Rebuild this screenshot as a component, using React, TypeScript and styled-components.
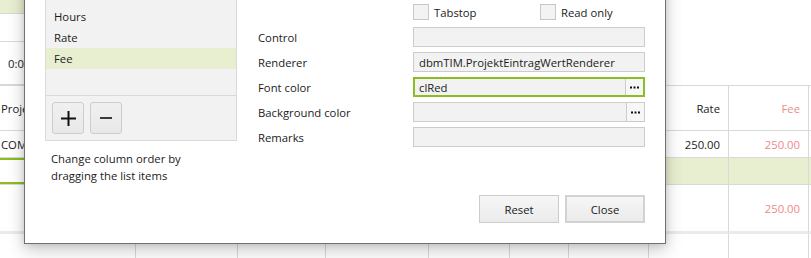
import styled, { createGlobalStyle } from "styled-components";

const GlobalStyle = createGlobalStyle`
  html, body {
    margin: 0;
    padding: 0;
    background: #ffffff;
  }
`;

const GRID_LINE = "#d9d9d9";
const SELECT_GREEN = "#e8efd1";
const ACCENT = "#8cbd22";
const FEE_PINK = "#ef8a8a";

const columns = [136, 102, 88, 103, 81, 59, 80, 80, 80, 2];

const listItems = ["Hours", "Rate", "Fee"];

export default function App() {
  return (
    <Page>
      <GlobalStyle />

      <Backdrop>
        <TopPanel>
          <TopRow $height={14} $selected />
          <TopRow $height={28} />
          <TopRow $height={43}>0:00</TopRow>
        </TopPanel>

        <Table>
          <Cell $height={45} $align="left">Projekt</Cell>
          {columns.slice(1, 7).map((_, i) => (
            <Cell key={`h${i}`} $height={45} />
          ))}
          <Cell $height={45}>Rate</Cell>
          <Cell $height={45} $pink>
            Fee
          </Cell>
          <Cell $height={45} $last />

          <Cell $height={27} $align="left">COMPANY</Cell>
          {columns.slice(1, 7).map((_, i) => (
            <Cell key={`a${i}`} $height={27} />
          ))}
          <Cell $height={27}>250.00</Cell>
          <Cell $height={27} $pink>
            250.00
          </Cell>
          <Cell $height={27} $last />

          <Cell $height={27} $editing />
          {columns.slice(1, 9).map((_, i) => (
            <Cell key={`b${i}`} $height={27} $selected />
          ))}
          <Cell $height={27} $selected $last />

          {columns.slice(0, 8).map((_, i) => (
            <Cell key={`c${i}`} $height={49} $band />
          ))}
          <Cell $height={49} $band $pink>
            250.00
          </Cell>
          <Cell $height={49} $band $last />

          {columns.map((_, i) => (
            <Cell key={`d${i}`} $height={30} $last={i === columns.length - 1} />
          ))}
        </Table>
      </Backdrop>

      <Dialog>
        <DialogBody>
          <ListColumn>
            <ListBox>
              <ListItems>
                {listItems.map((item) => (
                  <ListItem key={item} $selected={item === "Fee"}>
                    {item}
                  </ListItem>
                ))}
              </ListItems>
              <ListToolbar>
                <ToolButton aria-label="Add">
                  <svg width="15" height="15" viewBox="0 0 15 15">
                    <path d="M7.5 0v15M0 7.5h15" stroke="#111" strokeWidth="2" />
                  </svg>
                </ToolButton>
                <ToolButton aria-label="Remove">
                  <svg width="12" height="2" viewBox="0 0 12 2">
                    <path d="M0 1h12" stroke="#3a3a3a" strokeWidth="2" />
                  </svg>
                </ToolButton>
              </ListToolbar>
            </ListBox>
            <HelpText>
              Change column order by
              <br />
              dragging the list items
            </HelpText>
          </ListColumn>

          <Form>
            <CheckRow>
              <CheckItem $width={127}>
                <CheckBox />
                Tabstop
              </CheckItem>
              <CheckItem>
                <CheckBox />
                Read only
              </CheckItem>
            </CheckRow>

            <FieldRow>
              <FieldLabel>Control</FieldLabel>
              <Field />
            </FieldRow>
            <FieldRow>
              <FieldLabel>Renderer</FieldLabel>
              <Field>dbmTIM.ProjektEintragWertRenderer</Field>
            </FieldRow>
            <FieldRow>
              <FieldLabel>Font color</FieldLabel>
              <Field $focused>
                <FieldText>clRed</FieldText>
                <EllipsisButton>
                  <Dots />
                </EllipsisButton>
              </Field>
            </FieldRow>
            <FieldRow>
              <FieldLabel>Background color</FieldLabel>
              <Field>
                <FieldText />
                <EllipsisButton>
                  <Dots />
                </EllipsisButton>
              </Field>
            </FieldRow>
            <FieldRow>
              <FieldLabel>Remarks</FieldLabel>
              <Field />
            </FieldRow>
          </Form>
        </DialogBody>

        <DialogFooter>
          <DialogButton>Reset</DialogButton>
          <DialogButton $default>Close</DialogButton>
        </DialogFooter>
      </Dialog>
    </Page>
  );
}

function Dots() {
  return (
    <svg width="9" height="3" viewBox="0 0 9 3">
      <rect x="0" y="0.5" width="2" height="2" fill="#111" />
      <rect x="3.5" y="0.5" width="2" height="2" fill="#111" />
      <rect x="7" y="0.5" width="2" height="2" fill="#111" />
    </svg>
  );
}

const Page = styled.div`
  position: relative;
  width: 811px;
  height: 258px;
  overflow: hidden;
  background: #ffffff;
  font-family: "Segoe UI", "Open Sans", "Noto Sans", sans-serif;
  font-size: 11.3px;
  color: #1b1b1b;
`;

const Backdrop = styled.div`
  display: flex;
  flex-direction: column;
`;

const TopPanel = styled.div`
  width: 240px;
  display: flex;
  flex-direction: column;
`;

const TopRow = styled.div<{ $height: number; $selected?: boolean }>`
  box-sizing: border-box;
  height: ${(p) => p.$height}px;
  display: flex;
  align-items: center;
  padding-left: 8px;
  background: ${(p) => (p.$selected ? SELECT_GREEN : "transparent")};
  border-bottom: 1px solid ${GRID_LINE};
`;

const Table = styled.div`
  display: grid;
  grid-template-columns: ${columns.map((c) => `${c}px`).join(" ")};
  border-top: 1px solid ${GRID_LINE};
`;

const Cell = styled.div<{
  $height: number;
  $align?: "left" | "right";
  $pink?: boolean;
  $selected?: boolean;
  $editing?: boolean;
  $band?: boolean;
  $last?: boolean;
}>`
  box-sizing: border-box;
  height: ${(p) => p.$height}px;
  display: flex;
  align-items: center;
  justify-content: ${(p) => (p.$align === "left" ? "flex-start" : "flex-end")};
  padding: 0 ${(p) => (p.$align === "left" ? "0 0 1px" : "8px 0 0")};
  white-space: nowrap;
  overflow: hidden;
  color: ${(p) => (p.$pink ? FEE_PINK : "#1b1b1b")};
  background: ${(p) => (p.$selected ? SELECT_GREEN : "#ffffff")};
  border-right: ${(p) => (p.$last ? "none" : `1px solid ${GRID_LINE}`)};
  border-bottom: ${(p) => (p.$band ? "3px solid #ebebeb" : `1px solid ${GRID_LINE}`)};
  box-shadow: ${(p) =>
    p.$editing ? `inset 0 2px 0 ${ACCENT}, inset 0 -2px 0 ${ACCENT}` : "none"};
`;

const Dialog = styled.div`
  position: absolute;
  left: 24px;
  top: -40px;
  width: 642px;
  height: 284px;
  box-sizing: border-box;
  display: flex;
  flex-direction: column;
  padding: 20px;
  background: #ffffff;
  border: 1px solid #707070;
  box-shadow: 0 6px 16px rgba(0, 0, 0, 0.22), 0 0 6px rgba(0, 0, 0, 0.12);
`;

const DialogBody = styled.div`
  flex: 1;
  display: flex;
`;

const ListColumn = styled.div`
  width: 192px;
  display: flex;
  flex-direction: column;
`;

const ListBox = styled.div`
  box-sizing: border-box;
  height: 160px;
  display: flex;
  flex-direction: column;
  background: #f2f2f2;
  border: 1px solid #dadada;
`;

const ListItems = styled.div`
  flex: 1;
  padding-top: 24px;
  overflow: hidden;
`;

const ListItem = styled.div<{ $selected?: boolean }>`
  height: 21px;
  line-height: 21px;
  padding-left: 8px;
  background: ${(p) => (p.$selected ? SELECT_GREEN : "transparent")};
`;

const ListToolbar = styled.div`
  display: flex;
  gap: 6px;
  padding: 6px;
  border-top: 1px solid #d9d9d9;
`;

const ToolButton = styled.button`
  box-sizing: border-box;
  width: 32px;
  height: 32px;
  padding: 0;
  display: flex;
  align-items: center;
  justify-content: center;
  background: linear-gradient(#f0f0f0, #e8e8e8);
  border: 1px solid #cdcdcd;
  border-radius: 3px;
`;

const HelpText = styled.div`
  margin-top: 9px;
  padding-left: 6px;
  line-height: 17px;
`;

const Form = styled.div`
  margin-left: 21px;
  margin-top: 23px;
  display: flex;
  flex-direction: column;
  gap: 5px;
`;

const CheckRow = styled.div`
  display: flex;
  height: 16px;
  margin-left: 155px;
  margin-bottom: 2px;
`;

const CheckItem = styled.label<{ $width?: number }>`
  display: flex;
  align-items: center;
  gap: 5px;
  width: ${(p) => (p.$width ? `${p.$width}px` : "auto")};
`;

const CheckBox = styled.span`
  box-sizing: border-box;
  width: 16px;
  height: 16px;
  background: #f3f3f3;
  border: 1px solid #c8c8c8;
`;

const FieldRow = styled.div`
  display: flex;
  align-items: center;
  height: 20px;
`;

const FieldLabel = styled.div`
  width: 155px;
`;

const Field = styled.div<{ $focused?: boolean }>`
  box-sizing: border-box;
  width: 232px;
  height: 20px;
  display: flex;
  align-items: center;
  padding-left: ${(p) => (p.$focused ? "4px" : "5px")};
  background: #f2f2f2;
  border: ${(p) => (p.$focused ? `2px solid ${ACCENT}` : "1px solid #cccccc")};
  white-space: nowrap;
  overflow: hidden;
`;

const FieldText = styled.span`
  flex: 1;
`;

const EllipsisButton = styled.span`
  box-sizing: border-box;
  width: 18px;
  align-self: stretch;
  display: flex;
  align-items: center;
  justify-content: center;
  background: #f7f7f7;
  border-left: 1px solid #cccccc;
`;

const DialogFooter = styled.div`
  display: flex;
  justify-content: flex-end;
  gap: 6px;
`;

const DialogButton = styled.button<{ $default?: boolean }>`
  box-sizing: border-box;
  width: 80px;
  height: 28px;
  padding: 0;
  font-family: inherit;
  font-size: 11.3px;
  color: #1b1b1b;
  background: linear-gradient(#f6f6f6, #ebebeb);
  border: ${(p) => (p.$default ? "2px solid #d2d2d2" : "1px solid #cccccc")};
  border-radius: 0;
`;
